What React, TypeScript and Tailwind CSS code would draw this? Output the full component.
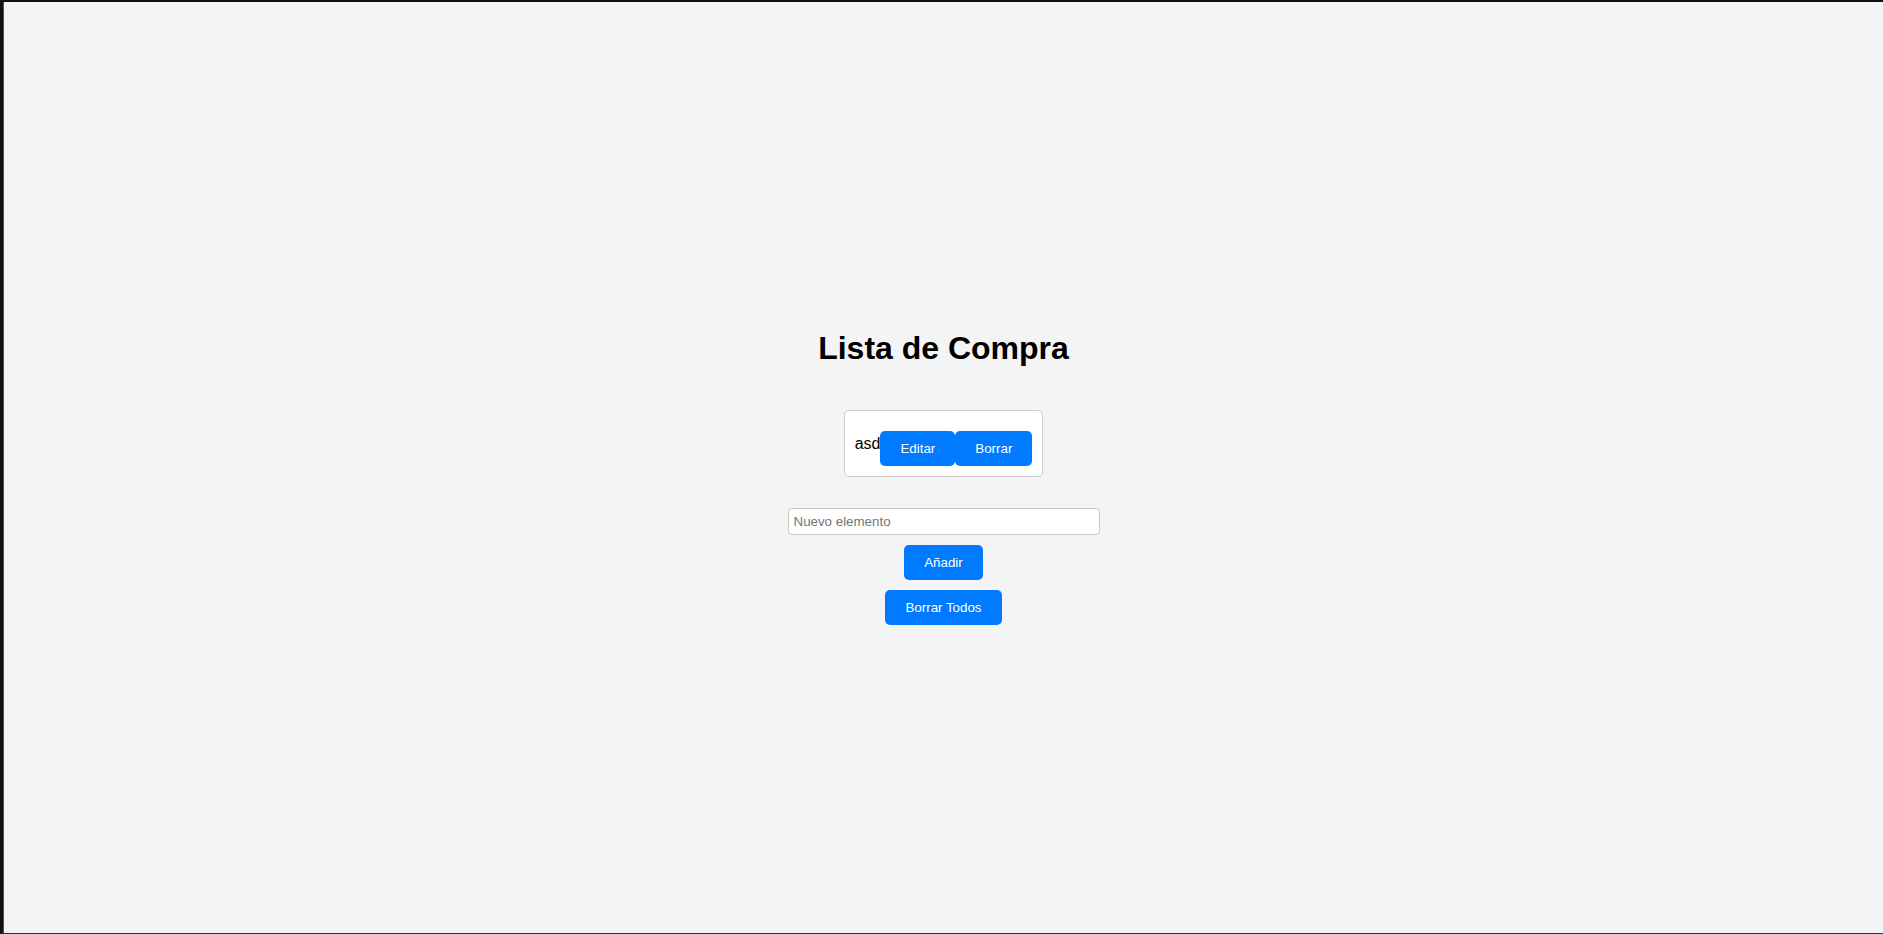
import React, { useState } from "react";

const font = { fontFamily: '"Liberation Sans", Arial, sans-serif' };

const Button = ({ children, className = "" }: { children: React.ReactNode; className?: string }) => (
	<button
		className={`bg-[#007bff] text-white text-[13.33px] leading-[15px] px-5 py-[10px] rounded-[5px] cursor-pointer hover:bg-[#0069d9] ${className}`}
	>
		{children}
	</button>
);

const App = () => {
	const [items] = useState<string[]>(["asd"]);
	const [value, setValue] = useState("");

	return (
		<div
			style={font}
			className="h-screen border-t-2 border-t-[#111114] border-l-[3px] border-l-[#111114] border-b border-b-[#1e2a6e] bg-[#f4f4f4]"
		>
			<div className="h-full border-l border-l-[#c2185b] flex items-center justify-center">
				<div className="flex flex-col items-center pt-[21px] pb-[1px]">
					<h1 className="text-[32px] leading-[37px] font-bold text-black">Lista de Compra</h1>

					<ul className="mt-[43px]">
						{items.map((item) => (
							<li
								key={item}
								className="flex items-center bg-white border border-[#cccccc] rounded-[5px] p-[10px] text-base leading-[18px] text-black"
							>
								<span>{item}</span>
								<Button className="mt-[10px]">Editar</Button>
								<Button className="mt-[10px]">Borrar</Button>
							</li>
						))}
					</ul>

					<input
						value={value}
						onChange={(e) => setValue(e.target.value)}
						placeholder="Nuevo elemento"
						className="mt-[31px] w-[312px] h-[27px] bg-white border border-[#c8c8c8] rounded-[4px] px-[5px] text-[13.33px] text-black placeholder:text-[#757575] outline-none"
					/>

					<Button className="mt-[10px]">Añadir</Button>
					<Button className="mt-[10px]">Borrar Todos</Button>
				</div>
			</div>
		</div>
	);
};

export default App;
